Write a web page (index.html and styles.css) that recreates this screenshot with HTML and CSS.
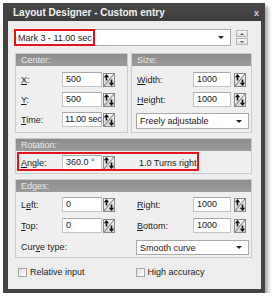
FILE: index.html
```html
<!DOCTYPE html>
<html lang="en">

<head>
    <meta charset="UTF-8" />
    <title>Layout Designer - Custom entry</title>
    <link rel="stylesheet" href="styles.css">
</head>

<body>
    <svg class="defs" width="0" height="0">
        <defs>
            <linearGradient id="spin-bg" x1="0" y1="0" x2="0" y2="1">
                <stop offset="0" stop-color="#f7f7f7" />
                <stop offset="1" stop-color="#d4d4d4" />
            </linearGradient>
            <symbol id="spin-icon" viewBox="0 0 12 14">
                <rect x="0.5" y="0.5" width="11" height="13" fill="url(#spin-bg)" stroke="#8a8a8a" />
                <line x1="1" y1="13" x2="11" y2="1" stroke="#707070" />
                <path d="M3.5 1 L0.8 4.2 H2.7 V7.5 H4.3 V4.2 H6.2 Z" fill="#111" />
                <path d="M8.5 13 L5.8 9.8 H7.7 V6.5 H9.3 V9.8 H11.2 Z" fill="#111" />
            </symbol>
        </defs>
    </svg>

    <div class="window">
        <div class="titlebar">
            <span class="title">Layout Designer - Custom entry</span>
            <span class="close">x</span>
        </div>
        <div class="content">
            <div class="top-row">
                <div class="combo main-combo">
                    <span>Mark 3 - 11.00 sec</span>
                    <span class="arrow"></span>
                </div>
                <div class="stepper">
                    <span class="step up"></span>
                    <span class="step down"></span>
                </div>
                <div class="mark mark-combo"></div>
            </div>

            <div class="pair">
                <div class="group center">
                    <div class="group-head">Center:</div>
                    <div class="group-body">
                        <div class="field">
                            <label><u>X</u>:</label>
                            <div class="input">500</div>
                            <svg class="spin"><use href="#spin-icon" /></svg>
                        </div>
                        <div class="field">
                            <label><u>Y</u>:</label>
                            <div class="input">500</div>
                            <svg class="spin"><use href="#spin-icon" /></svg>
                        </div>
                        <div class="field">
                            <label><u>T</u>ime:</label>
                            <div class="input tight">11.00 sec</div>
                            <svg class="spin"><use href="#spin-icon" /></svg>
                        </div>
                    </div>
                </div>
                <div class="group size">
                    <div class="group-head">Size:</div>
                    <div class="group-body">
                        <div class="field wide">
                            <label><u>W</u>idth:</label>
                            <div class="input">1000</div>
                            <svg class="spin"><use href="#spin-icon" /></svg>
                        </div>
                        <div class="field wide">
                            <label><u>H</u>eight:</label>
                            <div class="input">1000</div>
                            <svg class="spin"><use href="#spin-icon" /></svg>
                        </div>
                        <div class="combo small-combo">
                            <span>Freely adjustable</span>
                            <span class="arrow"></span>
                        </div>
                    </div>
                </div>
            </div>

            <div class="group rotation">
                <div class="group-head">Rotation:</div>
                <div class="group-body row-body">
                    <div class="field">
                        <label><u>A</u>ngle:</label>
                        <div class="input">360.0 °</div>
                        <svg class="spin"><use href="#spin-icon" /></svg>
                    </div>
                    <span class="turns">1.0 Turns right</span>
                </div>
                <div class="mark mark-angle"></div>
            </div>

            <div class="group edges">
                <div class="group-head">Edges:</div>
                <div class="group-body edge-body">
                    <div class="field">
                        <label>L<u>e</u>ft:</label>
                        <div class="input">0</div>
                        <svg class="spin"><use href="#spin-icon" /></svg>
                    </div>
                    <div class="field wide">
                        <label><u>R</u>ight:</label>
                        <div class="input">1000</div>
                        <svg class="spin"><use href="#spin-icon" /></svg>
                    </div>
                    <div class="field">
                        <label><u>T</u>op:</label>
                        <div class="input">0</div>
                        <svg class="spin"><use href="#spin-icon" /></svg>
                    </div>
                    <div class="field wide">
                        <label><u>B</u>ottom:</label>
                        <div class="input">1000</div>
                        <svg class="spin"><use href="#spin-icon" /></svg>
                    </div>
                    <span class="curve-label">Cur<u>v</u>e type:</span>
                    <div class="combo small-combo curve-combo">
                        <span>Smooth curve</span>
                        <span class="arrow"></span>
                    </div>
                </div>
            </div>

            <div class="checks">
                <div class="check"><span class="box"></span>Relative input</div>
                <div class="check"><span class="box"></span>High accuracy</div>
            </div>
        </div>
    </div>
</body>

</html>
```

FILE: styles.css
```css
body {
    margin: 0;
    padding: 3px 0 0 3px;
    background: #ffffff;
    font-family: 'Liberation Sans', Arial, sans-serif;
    font-size: 9px;
    color: #1a1a1a;
}

.defs {
    position: absolute;
    width: 0;
    height: 0;
}

.window {
    width: 253px;
    height: 286px;
    border: solid #434343;
    border-width: 0 4px 4px 5px;
    background: #434343;
    box-shadow: 3px 3px 4px rgba(0, 0, 0, 0.35);
}

.titlebar {
    height: 18px;
    display: flex;
    align-items: center;
    justify-content: space-between;
    padding: 0 2px 0 5px;
    background: linear-gradient(#4a4a4a, #3c3c3c);
    color: #f2f2f2;
}

.title {
    font-weight: bold;
    font-size: 10px;
}

.close {
    font-weight: bold;
    font-size: 9px;
    color: #d0d0d0;
    margin-top: 2px;
}

.content {
    height: 268px;
    box-sizing: border-box;
    background: #ededed;
    padding: 8px 9px 0 6px;
    display: flex;
    flex-direction: column;
}

/* top combo */
.top-row {
    position: relative;
    display: flex;
    align-items: center;
    gap: 5px;
    height: 17px;
}

.combo {
    display: flex;
    align-items: center;
    justify-content: space-between;
    background: #ffffff;
    border: 1px solid #a9a9a9;
    box-sizing: border-box;
    padding: 0 6px 0 3px;
}

.main-combo {
    width: 217px;
    height: 17px;
}

.arrow {
    width: 0;
    height: 0;
    border-left: 3px solid transparent;
    border-right: 3px solid transparent;
    border-top: 3px solid #222;
}

.stepper {
    display: flex;
    flex-direction: column;
    gap: 1px;
}

.step {
    width: 12px;
    height: 7px;
    box-sizing: border-box;
    border: 1px solid #b5b5b5;
    background: linear-gradient(#fafafa, #dcdcdc);
    display: flex;
    align-items: center;
    justify-content: center;
}

.step::after {
    content: "";
    border-left: 2px solid transparent;
    border-right: 2px solid transparent;
}

.up::after {
    border-bottom: 2px solid #4a5a7a;
}

.down::after {
    border-top: 2px solid #4a5a7a;
}

.mark {
    position: absolute;
    border: 2px solid #e0161b;
    box-sizing: border-box;
    pointer-events: none;
}

.mark-combo {
    left: 0;
    top: 0;
    width: 81px;
    height: 17px;
}

/* groups */
.pair {
    display: flex;
    gap: 3px;
    margin-top: 7px;
    margin-left: 1px;
}

.group {
    position: relative;
    border: 1px solid #cbcbcb;
    background: #efefef;
}

.group-head {
    height: 12px;
    line-height: 12px;
    padding-left: 5px;
    background: linear-gradient(#8c8c8c, #9b9b9b);
    color: #ececec;
}

.group-body {
    padding: 6px 4px 5px 5px;
    display: flex;
    flex-direction: column;
    gap: 5px;
}

.center {
    width: 111px;
}

.size {
    width: 119px;
}

.field {
    display: flex;
    align-items: center;
    height: 15px;
}

.field label {
    width: 41px;
}

.field.wide label {
    width: 56px;
}

.input {
    width: 40px;
    height: 15px;
    box-sizing: border-box;
    background: #ffffff;
    border: 1px solid #c4c4c4;
    border-top-color: #a8a8a8;
    padding: 0 0 0 3px;
    line-height: 13px;
    white-space: nowrap;
}

.input.tight {
    padding-left: 2px;
    letter-spacing: -0.2px;
}

.wide .input {
    width: 38px;
}

.spin {
    width: 12px;
    height: 14px;
    margin-left: 1px;
    flex-shrink: 0;
}

.wide .spin {
    margin-left: 3px;
}

.small-combo {
    height: 16px;
    width: 113px;
    margin-left: -1px;
    margin-top: 1px;
}

.size .group-body {
    padding-bottom: 3px;
}

.rotation,
.edges {
    margin-top: 5px;
    margin-left: 1px;
    width: 235px;
}

.row-body {
    flex-direction: row;
    align-items: center;
    gap: 24px;
    padding: 4px 5px 3px;
}

.mark-angle {
    left: 1px;
    top: 13px;
    width: 182px;
    height: 19px;
}

.edge-body {
    display: grid;
    grid-template-columns: 110px 116px;
    column-gap: 6px;
    row-gap: 6px;
    padding-top: 5px;
    padding-bottom: 2px;
}

.curve-label {
    align-self: center;
}

.curve-combo {
    height: 15px;
}

.checks {
    display: flex;
    margin-top: 9px;
    padding-left: 4px;
    gap: 51px;
}

.check {
    display: flex;
    align-items: center;
    gap: 3px;
    height: 10px;
    color: #222;
}

.box {
    width: 9px;
    height: 9px;
    box-sizing: border-box;
    border: 1px solid #a5a5a5;
    background: linear-gradient(135deg, #dedede, #ffffff);
}
```
